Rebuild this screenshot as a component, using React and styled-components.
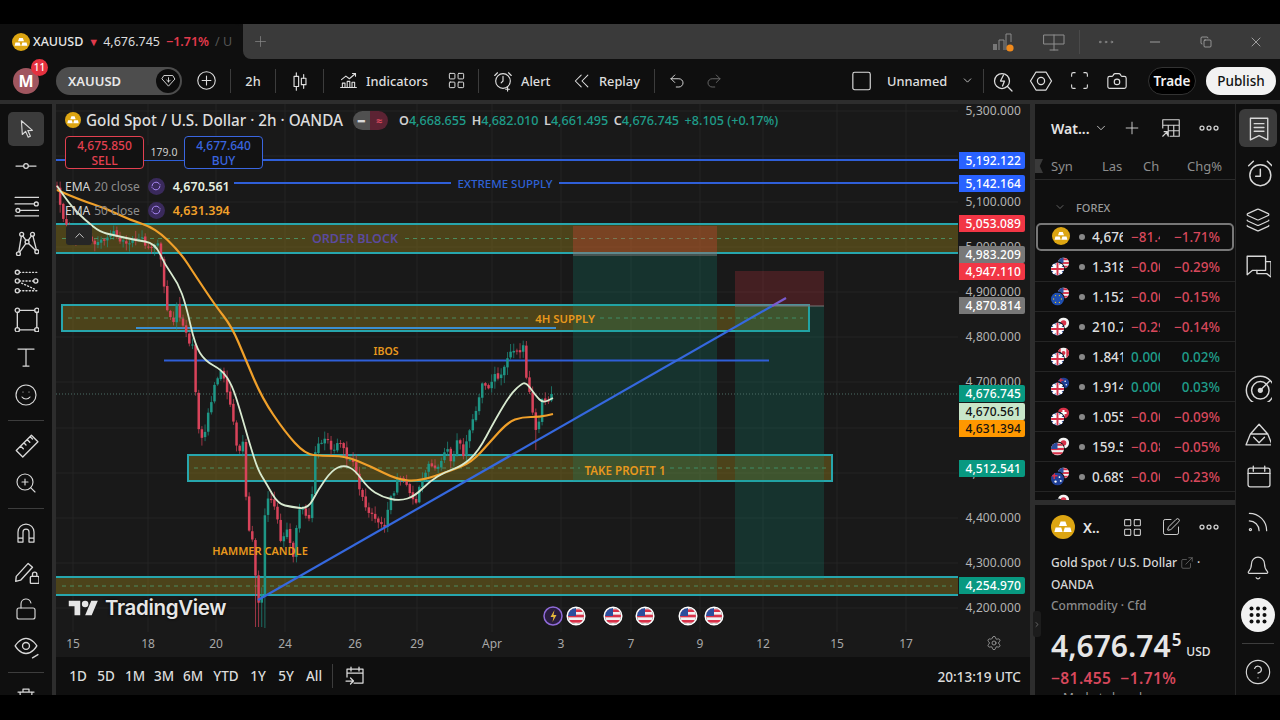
import React, { useId } from 'react';
import styled, { createGlobalStyle } from 'styled-components';
import { Rss, Bell, CircleHelp, Undo2, Redo2, Camera, Scan, SquarePen, LayoutGrid, ExternalLink, ChevronDown, ChevronRight, ChevronUp, Smile, ZoomIn, Plus, Minus, X, Copy, Layers, LockOpen, Ellipsis, Settings } from 'lucide-react';

const FONT = `"Noto Sans", "Open Sans", sans-serif`;

const GlobalStyle = createGlobalStyle`
  html, body { margin: 0; padding: 0; background: #000; }
  * { box-sizing: border-box; }
`;

const Page = styled.div`
  width: 1280px; height: 720px; background: #000; padding-top: 24px; overflow: hidden;
  font-family: ${FONT}; color: #dcdcdc;
`;
const Frame = styled.div`
  height: 671px; display: flex; flex-direction: column; background: #2d2d2d; overflow: hidden;
`;

/* ---- title bar ---- */
const TitleBar = styled.div`
  height: 35px; flex: none; display: flex; background: #0f0f0f;
`;
const Tab = styled.div`
  width: 243px; flex: none; display: flex; align-items: center; gap: 3px; padding-left: 12px;
  font-size: 12.5px; white-space: nowrap; overflow: hidden; background: #0f0f0f; border-radius: 0 8px 0 0;
`;
const TabName = styled.span` font-weight: 500; color: #e8e8e8; margin-right: 2px; `;
const TabDown = styled.span` color: #e23a4c; font-size: 11px; margin-right: 1px; `;
const TabPct = styled.span` color: #e23a4c; font-weight: 600; margin-left: 3px; `;
const TabDim = styled.span` color: #555; margin-left: 3px; `;
const WindowArea = styled.div`
  flex: 1; display: flex; align-items: center; background: #3a3a3a; border-radius: 0 0 0 8px; color: #9a9a9a; padding-left: 9px;
`;
const Spring = styled.div` flex: 1; `;
const WinBtn = styled.div`
  width: ${p => p.$w}px; display: flex; justify-content: center; align-items: center; color: ${p => p.$c || '#d0d0d0'};
`;
const WinSep = styled.div` width: 1px; height: 24px; background: #4a4a4a; `;

/* ---- toolbar ---- */
const Toolbar = styled.div`
  height: 41px; flex: none; display: flex; align-items: center; background: #0f0f0f; padding: 2px 4px 0 13px; margin-bottom: 4px;
`;
const Avatar = styled.div`
  position: relative; width: 26px; height: 26px; border-radius: 50%; background: #a0565f; color: #fff; font-weight: 700; font-size: 16px;
  display: flex; align-items: center; justify-content: center; margin-right: 17px; flex: none;
`;
const Badge = styled.span`
  position: absolute; top: -9px; right: -9px; width: 17px; height: 17px; border-radius: 50%; background: #e5313f; color: #fff; font-size: 10px; font-weight: 500;
  display: flex; align-items: center; justify-content: center;
`;
const SearchPill = styled.div`
  width: 126px; height: 28px; border-radius: 14px; background: #4d4d4d; display: flex; align-items: center; justify-content: space-between; padding: 0 2px 0 12px;
  font-size: 13px; font-weight: 600; color: #e8e8e8; flex: none;
`;
const DiamondWrap = styled.div`
  width: 24px; height: 24px; border-radius: 50%; background: #0c0c0c; display: flex; align-items: center; justify-content: center;
`;
const Tool = styled.div`
  width: ${p => p.$w}px; flex: none; display: flex; align-items: center; justify-content: ${p => p.$pl ? 'flex-start' : 'center'};
  padding-left: ${p => p.$pl || 0}px; gap: ${p => p.$gap || 0}px; font-size: 12.8px; color: ${p => p.$c || '#dedede'}; white-space: nowrap; font-weight: 500;
`;
const ToolSep = styled.div` width: 1px; height: 24px; background: #3c3c3c; flex: none; `;
const TradePill = styled.div`
  width: 48px; height: 28px; margin-left: 12px; border-radius: 14px; border: 1px solid #333; background: #000; color: #f2f2f2; font-size: 13.5px; font-weight: 600;
  display: flex; align-items: center; justify-content: center; flex: none;
`;
const PublishPill = styled.div`
  width: 70px; height: 28px; margin-left: 10px; border-radius: 14px; background: #f2f2f2; color: #111; font-size: 13.5px; font-weight: 500;
  display: flex; align-items: center; justify-content: center; flex: none;
`;

/* ---- body ---- */
const Body = styled.div` flex: 1; min-height: 0; display: flex; `;
const ToolColumn = styled.div`
  width: 52px; flex: none; margin-right: 4px; background: #0f0f0f; display: flex; flex-direction: column; align-items: center; padding-top: 8px; overflow: hidden; color: #d8d8d8;
`;
const ToolCell = styled.div`
  width: 36px; height: ${p => p.$h || 38}px; flex: none; display: flex; align-items: center; justify-content: center; border-radius: 5px;
  background: ${p => p.$on ? '#3b3b3b' : 'transparent'};
`;
const ToolRule = styled.div`
  width: 36px; height: 1px; flex: none; background: #3d3d3d; margin: ${p => p.$m || '6px 0 5px'};
`;
const MainColumn = styled.div` width: 974px; flex: none; display: flex; flex-direction: column; `;
const ChartRow = styled.div` flex: 1; min-height: 0; display: flex; background: #191919; `;
const PlotColumn = styled.div` width: 902px; flex: none; display: flex; flex-direction: column; `;
const Plot = styled.div` position: relative; height: 528px; flex: none; overflow: hidden; `;
const PlotSvg = styled.svg` display: block; font-family: ${FONT}; `;
const TimeAxis = styled.div`
  position: relative; height: 25px; flex: none; font-size: 12px; color: #a8a8a8;
`;
const TimeTick = styled.span`
  position: absolute; top: 3px; left: ${p => p.$x - 56}px; transform: translateX(-50%); line-height: 18px;
`;
const PriceAxis = styled.div`
  position: relative; width: 72px; flex: none; font-size: 12px; color: #b4b4b4;
`;
const AxisLabel = styled.span`
  position: absolute; right: 9px; top: ${p => p.$y - 104 - 9}px; line-height: 18px; letter-spacing: .1px;
`;
const PriceTag = styled.span`
  position: absolute; left: 1px; width: 66px; height: ${p => p.$h || 17}px; top: ${p => p.$y - 104}px; background: ${p => p.$bg}; color: ${p => p.$fg || '#fff'};
  font-size: 12px; font-weight: 500; line-height: ${p => p.$h || 17}px; text-align: right; padding-right: 4px; border-radius: 0 2px 2px 0; letter-spacing: .1px;
`;
const GearSlot = styled.div` position: absolute; right: 28px; top: 531px; color: #a8a8a8; `;

/* legend over the chart */
const Legend = styled.div`
  position: absolute; left: 9px; top: 4px; display: flex; flex-direction: column; align-items: flex-start;
`;
const SymbolRow = styled.div` display: flex; align-items: center; height: 24px; font-size: 15.25px; color: #dedede; white-space: nowrap; font-weight: 500; `;
const SymbolName = styled.span` margin-left: 5px; `;
const StatusPill = styled.div`
  display: flex; width: 35px; height: 19px; border-radius: 10px; overflow: hidden; margin-left: 10px; margin-right: 11px;
`;
const StatusHalf = styled.span`
  flex: 1; display: flex; align-items: center; justify-content: center; background: ${p => p.$bg}; color: ${p => p.$c}; font-size: 11px; font-weight: 700;
`;
const Ohlc = styled.span` font-size: 12.6px; color: #1f9d8a; display: flex; gap: 5.5px; font-weight: 500; `;
const OhlcKey = styled.b` color: #d0d0d0; font-weight: 600; `;
const TradeRow = styled.div` display: flex; align-items: center; margin-top: 4px; height: 33px; `;
const TradeBox = styled.div`
  width: 79px; height: 33px; border-radius: 4px; border: 1px solid ${p => p.$c}; background: #121212; color: ${p => p.$c}; display: flex; flex-direction: column; align-items: center; justify-content: center;
  font-size: 12px; line-height: 15px; font-weight: 500;
`;
const Spread = styled.span` width: 40px; text-align: center; font-size: 10.5px; color: #cfcfcf; background: #191919; line-height: 15px; `;
const EmaRow = styled.div`
  display: flex; align-items: center; height: 24px; font-size: 12px; color: #8d8d8d; margin-top: ${p => p.$mt || 0}px; white-space: nowrap;
`;
const EmaKey = styled.span` color: #d6d6d6; margin-right: 4px; `;
const EmaCircle = styled.span`
  width: 17px; height: 17px; margin: 0 8px; border-radius: 50%; background: #3a2a5c; color: #a483ee; display: flex; align-items: center; justify-content: center;
`;
const EmaVal = styled.span` color: ${p => p.$c}; font-weight: 600; font-size: 12.5px; `;
const CollapseBtn = styled.div`
  position: absolute; left: 10px; top: 121px; width: 26px; height: 20px; border-radius: 3px; background: #262626; color: #d0d0d0; display: flex; align-items: center; justify-content: center;
`;
const Brand = styled.div`
  position: absolute; left: 12px; top: 491px; display: flex; align-items: center; gap: 6px; color: #e6e6e6; font-family: Inter, ${FONT}; font-weight: 600; font-size: 20.5px; letter-spacing: -.35px; text-shadow: 0 0 3px #000;
`;

/* bottom range bar */
const RangeBar = styled.div`
  height: 38px; flex: none; background: #0f0f0f; display: flex; align-items: center; padding-left: 8px; font-size: 13.5px; color: #dcdcdc; font-weight: 500;
`;
const RangeBtn = styled.div` width: ${p => p.$w}px; flex: none; text-align: center; `;
const RangeSep = styled.div` width: 1px; height: 24px; background: #3c3c3c; margin: 0 10px 0 4px; `;
const Clock = styled.div` margin-left: auto; padding-right: 9px; font-size: 13.6px; `;

/* right panel */
const SideColumn = styled.div` width: 200px; margin-left: 5px; flex: none; display: flex; flex-direction: column; gap: 5px; position: relative; `;
const WatchPanel = styled.div` height: 396px; flex: none; background: #0f0f0f; overflow: hidden; display: flex; flex-direction: column; `;
const WatchHead = styled.div` height: 48px; flex: none; display: flex; align-items: center; padding-left: 16px; font-size: 14px; font-weight: 600; color: #e4e4e4; `;
const HeadBtn = styled.div` width: ${p => p.$w}px; margin-left: ${p => p.$ml || 0}px; flex: none; display: flex; align-items: center; justify-content: center; color: #d4d4d4; `;
const ColHead = styled.div`
  height: 28px; flex: none; display: flex; align-items: center; font-size: 13px; color: #8d8d8d; border-bottom: 1px solid #2a2a2a; padding-left: 16px; position: relative;
`;
const ColName = styled.span` width: ${p => p.$w}px; flex: none; `;
const SortFlag = styled.span` position: absolute; left: 0; top: 7px; width: 8px; height: 14px; background: #3a3a3a; clip-path: polygon(0 0, 100% 0, 60% 50%, 100% 100%, 0 100%); `;
const SectionHead = styled.div`
  height: 30px; margin-top: 12px; flex: none; display: flex; align-items: center; padding-left: 19px; gap: 10px; font-size: 11px; color: #9a9a9a; font-weight: 500;
`;
const Row = styled.div`
  height: 30px; flex: none; display: flex; align-items: center; padding-left: 16px; font-size: 13.5px; font-weight: 500; position: relative;
  border-bottom: 1px solid #252525;
  ${p => p.$sel && `
    border: 2px solid #777; border-radius: 5px; margin: 1px; height: 28px; padding-left: 13px; padding-right: 13px;
  `}
`;
const RowIcon = styled.div` width: 24px; height: 24px; flex: none; margin-right: 4px; `;
const GoldSlot = styled(RowIcon)` padding: 2px 0 0 1px; `;
const Dot = styled.span` width: 6px; height: 6px; border-radius: 50%; background: #888; flex: none; margin-right: 7px; `;
const CellClip = styled.span`
  width: ${p => p.$w}px; flex: none; overflow: hidden; white-space: nowrap; color: ${p => p.$c}; margin-right: ${p => p.$mr || 0}px;
`;
const RowPct = styled.span` width: 60px; flex: none; text-align: right; color: ${p => p.$c}; `;
const PartialRow = styled.div` height: 8px; padding-left: 16px; flex: none; `;

const DetailPanel = styled.div` flex: 1; min-height: 0; overflow: hidden; background: #0f0f0f; padding-left: 16px; `;
const DetailHead = styled.div` height: 44px; display: flex; align-items: center; font-size: 14px; font-weight: 600; color: #e4e4e4; `;
const HeadName = styled.span` margin-left: 8px; `;
const DetailLine = styled.div`
  display: flex; align-items: center; gap: 3px; height: 21.5px; font-size: 12px; font-weight: 500; color: ${p => p.$c || '#d8d8d8'}; white-space: nowrap;
`;
const FirstLine = styled(DetailLine)` margin-top: 3px; `;
const BigPrice = styled.div`
  display: flex; align-items: flex-start; height: 36px; margin-top: 11px; font-size: 30px; line-height: 36px; font-weight: 600; color: #e6e6e6; white-space: nowrap;
`;
const Frac = styled.sup` font-size: 17px; line-height: 24px; margin: 0 0 0 1px; vertical-align: top; `;
const Unit = styled.span` font-size: 12px; font-weight: 500; margin-left: 5px; line-height: 18px; margin-top: 15px; `;
const DayChange = styled.div` font-size: 15.5px; font-weight: 600; line-height: 22px; margin-top: 3px; color: #d8485c; letter-spacing: .4px; display: flex; gap: 9px; `;
const MarketNote = styled.div` font-size: 12px; color: #999; line-height: 16px; padding-left: 12px; margin-top: 1px; white-space: nowrap; `;
const SideTab = styled.div`
  position: absolute; left: -2px; top: 507px; width: 8px; height: 26px; border-radius: 3px; background: #1c1c1c; color: #aaa; display: flex; align-items: center; justify-content: center;
`;

/* rail */
const Rail = styled.div`
  flex: 1; background: #0f0f0f; border-left: 1px solid #262626; display: flex; flex-direction: column; align-items: center; padding-top: 1px; color: #d8d8d8; overflow: hidden;
`;
const RailCell = styled.div`
  height: ${p => p.$h}px; margin-top: ${p => p.$mt || 0}px; flex: none; display: flex; align-items: center; justify-content: center; width: 38px;
`;
const RailOn = styled.div`
  width: 38px; height: 38px; border-radius: 6px; background: #3b3b3b; display: flex; align-items: center; justify-content: center;
`;
const AppsDot = styled.div`
  width: 34px; height: 34px; border-radius: 50%; background: #f2f2f2; color: #0f0f0f; display: flex; align-items: center; justify-content: center;
`;
const RailRule = styled.div` width: 32px; height: 1px; background: #3d3d3d; flex: none; `;

const Ico = styled.svg`
  display: block; flex: none; fill: none; stroke: currentColor; stroke-width: ${p => p.$sw || 1.25}; stroke-linecap: round; stroke-linejoin: round;
`;
const GoldSvg = styled.svg` flex: none; display: block; `;

const I = ({ s = 24, sw, children, vb = '0 0 24 24' }) => <Ico width={s} height={s} viewBox={vb} $sw={sw}>{children}</Ico>;

const Gold = ({ s = 16 }) => (
  <GoldSvg width={s} height={s} viewBox="0 0 24 24">
    <circle cx="12" cy="12" r="12" fill="#dca512" />
    <path d="M9.6 6.5h4.8l1.6 4.5H8z M4.6 12.5h5.6l1.4 4.5H3.4z M13.8 12.5h5.6l1.2 4.5h-8.2z" fill="#fff" />
  </GoldSvg>
);

function FlagFill({ kind, cx, cy, r }) {
  const x = cx - r, y = cy - r, d = r * 2;
  switch (kind) {
    case 'uk': return <g>
      <rect x={x} y={y} width={d} height={d} fill="#2c4d9c" />
      <path d={`M${x} ${y}L${x + d} ${y + d}M${x + d} ${y}L${x} ${y + d}`} stroke="#fff" strokeWidth={r * .45} />
      <path d={`M${x} ${cy}H${x + d}M${cx} ${y}V${y + d}`} stroke="#fff" strokeWidth={r * .6} />
      <path d={`M${x} ${cy}H${x + d}M${cx} ${y}V${y + d}`} stroke="#d8324a" strokeWidth={r * .3} />
    </g>;
    case 'us': return <g>
      <rect x={x} y={y} width={d} height={d} fill="#f2f2f2" />
      {[0, 2, 4].map(i => <rect key={i} x={x} y={y + i * d / 6 + d / 12} width={d} height={d / 6} fill="#d8324a" />)}
      <rect x={x} y={y} width={r} height={r} fill="#2c4d9c" />
    </g>;
    case 'eu': return <g>
      <rect x={x} y={y} width={d} height={d} fill="#1f4fb0" />
      {[0, 60, 120, 180, 240, 300].map(a => <circle key={a} cx={cx + Math.cos(a * .01745) * r * .6} cy={cy + Math.sin(a * .01745) * r * .6} r={r * .1} fill="#e8c520" />)}
    </g>;
    case 'jp': return <g>
      <rect x={x} y={y} width={d} height={d} fill="#f4f4f4" />
      <circle cx={cx} cy={cy} r={r * .5} fill="#d8324a" />
    </g>;
    case 'ca': return <g>
      <rect x={x} y={y} width={d} height={d} fill="#f4f4f4" />
      <rect x={x} y={y} width={r * .5} height={d} fill="#d8324a" />
      <rect x={x + d - r * .5} y={y} width={r * .5} height={d} fill="#d8324a" />
      <circle cx={cx} cy={cy} r={r * .35} fill="#d8324a" />
    </g>;
    case 'au': return <g>
      <rect x={x} y={y} width={d} height={d} fill="#1f3f96" />
      <circle cx={cx + r * .3} cy={cy - r * .3} r={r * .14} fill="#fff" />
      <circle cx={cx + r * .5} cy={cy + r * .3} r={r * .14} fill="#fff" />
      <circle cx={cx - r * .3} cy={cy + r * .4} r={r * .18} fill="#fff" />
      <path d={`M${x} ${y + r * .5}H${cx}M${x + r * .5} ${y}V${cy}`} stroke="#d8324a" strokeWidth={r * .22} />
    </g>;
    case 'ch': return <g>
      <rect x={x} y={y} width={d} height={d} fill="#d8324a" />
      <path d={`M${cx - r * .55} ${cy}H${cx + r * .55}M${cx} ${cy - r * .55}V${cy + r * .55}`} stroke="#fff" strokeWidth={r * .38} />
    </g>;
    default: return null;
  }
}
function Flag({ kind, cx, cy, r, ring }) {
  const id = useId();
  return (
    <g>
      <clipPath id={id}><circle cx={cx} cy={cy} r={r} /></clipPath>
      <g clipPath={`url(#${id})`}><FlagFill kind={kind} cx={cx} cy={cy} r={r} /></g>
      {ring && <circle cx={cx} cy={cy} r={r + .8} fill="none" stroke="#fff" strokeWidth="1.5" />}
    </g>
  );
}
const PairSvg = styled.svg` display: block; `;
const PairIcon = ({ front, back }) => (
  <PairSvg width="24" height="24" viewBox="0 0 24 24">
    <Flag kind={back} cx={12.5} cy={8} r={5.6} />
    <circle cx={6.5} cy={14} r={7.4} fill="#0f0f0f" />
    <Flag kind={front} cx={6.5} cy={14} r={6.5} />
  </PairSvg>
);

/* ---- chart data ---- */
const CLOSES = [[57, 186], [62, 212], [68, 230], [76, 238], [84, 235], [92, 243], [100, 242], [108, 235], [116, 234], [124, 243], [132, 240], [140, 238], [150, 247], [157, 243], [162, 262], [166, 305], [172, 326], [177, 303], [181, 322], [187, 338], [193, 345], [197, 420], [203, 440], [208, 415], [213, 392], [220, 372], [226, 385], [232, 410], [238, 455], [243, 440], [248, 530], [253, 545], [258, 602], [262, 590], [266, 490], [270, 500], [276, 505], [281, 545], [287, 530], [293, 560], [298, 510], [304, 507], [310, 525], [315, 450], [320, 440], [326, 438], [332, 452], [340, 440], [348, 462], [354, 458], [360, 490], [368, 512], [376, 520], [384, 530], [390, 500], [398, 480], [406, 484], [415, 505], [422, 478], [430, 462], [438, 470], [446, 445], [452, 462], [458, 440], [464, 455], [470, 430], [476, 410], [482, 385], [488, 390], [494, 372], [500, 378], [506, 362], [512, 345], [518, 355], [524, 345], [527, 385], [531, 400], [535, 430], [539, 425], [543, 395], [547, 405], [553, 394]];
const E20 = [[57, 186], [70, 205], [85, 220], [100, 232], [113, 235], [135, 240], [155, 243], [165, 265], [178, 283], [186, 305], [195, 345], [205, 361], [222, 370], [232, 385], [240, 410], [250, 445], [258, 470], [266, 483], [278, 504], [292, 507], [308, 509], [318, 490], [332, 470], [344, 465], [355, 470], [368, 488], [382, 497], [400, 501], [415, 496], [430, 481], [445, 472], [462, 466], [478, 452], [495, 420], [510, 395], [520, 385], [526, 382], [536, 396], [543, 403], [553, 398]];
const E50 = [[57, 190], [80, 200], [105, 208], [130, 220], [155, 228], [180, 252], [195, 275], [215, 305], [232, 327], [245, 358], [262, 398], [285, 432], [305, 454], [322, 456], [345, 456], [370, 466], [398, 480], [420, 481], [450, 471], [472, 462], [490, 442], [508, 422], [522, 417], [540, 417], [553, 414]];

function interp(pts, x) {
  for (let i = 1; i < pts.length; i++) {
    if (x <= pts[i][0]) {
      const [a, b] = pts[i - 1], [c, d] = pts[i];
      return b + (d - b) * (x - a) / (c - a);
    }
  }
  return pts[pts.length - 1][1];
}
function makeCandles() {
  let s = 1234567;
  const r = () => { s = (s * 16807) % 2147483647; return s / 2147483647; };
  const list = [];
  let prev = CLOSES[0][1];
  for (let x = 57; x <= 553; x += 3.15) {
    const c = interp(CLOSES, x) + (r() - .5) * 7;
    const o = prev + (r() - .5) * 2;
    const top = Math.min(o, c), bot = Math.max(o, c);
    let hi = top - r() * 7 - 1, lo = bot + r() * 7 + 1;
    if (x > 255 && x < 262) lo = 627;
    if (x > 262 && x < 265) lo = 628;
    if (x > 524 && x < 528) hi = 341;
    if (x > 533 && x < 537) lo = 450;
    list.push({ x, o, c, hi, lo, up: c < o });
    prev = c;
  }
  return list;
}
const CANDLES = makeCandles();
const smooth = pts => {
  let d = `M${pts[0][0]} ${pts[0][1]}`;
  for (let i = 1; i < pts.length - 1; i++) {
    const mx = (pts[i][0] + pts[i + 1][0]) / 2, my = (pts[i][1] + pts[i + 1][1]) / 2;
    d += `Q${pts[i][0]} ${pts[i][1]} ${mx} ${my}`;
  }
  const l = pts[pts.length - 1];
  return d + `L${l[0]} ${l[1]}`;
};

const VTICKS = [73, 148, 216, 285, 355, 417, 492, 561, 631, 700, 763, 837, 906];
const HTICKS = [111, 156, 202, 247, 292, 337, 382, 428, 473, 518, 563, 608];
const TIME_LABELS = [[73, '15'], [148, '18'], [216, '20'], [285, '24'], [355, '26'], [417, '29'], [492, 'Apr'], [561, '3'], [631, '7'], [700, '9'], [763, '12'], [837, '15'], [906, '17']];
const AXIS_LABELS = [[111, '5,300.000'], [202, '5,100.000'], [247, '5,000.000'], [292, '4,900.000'], [337, '4,800.000'], [382, '4,700.000'], [473, '4,500.000'], [518, '4,400.000'], [563, '4,300.000'], [608, '4,200.000']];
const TAGS = [
  [152, '5,192.122', '#2962ff'], [175, '5,142.164', '#2962ff'], [215, '5,053.089', '#f23645'],
  [246, '4,983.209', '#787878'], [263, '4,947.110', '#f23645'], [297, '4,870.814', '#787878'],
  [385, '4,676.745', '#089981'], [403, '4,670.561', '#c8e6c9', '#111'], [420, '4,631.394', '#ff9800', '#111'],
  [460, '4,512.541', '#089981'], [577, '4,254.970', '#089981']
];
const ZONE = '#27a6ad', ZONEFILL = 'rgba(128,110,28,.5)', BLUE = '#2f5fd8', ORANGE = '#e8981d';

const Zone = ({ x, y, w, h, sides, gap }) => {
  const my = y + h / 2;
  const segs = gap ? [[x + 6, gap[0]], [gap[1], x + w - 6]] : [[x + 6, x + w - 6]];
  return (
    <g>
      <rect x={x} y={y} width={w} height={h} fill={ZONEFILL} />
      {segs.map(([a, b]) => <line key={a} x1={a} x2={b} y1={my} y2={my} stroke="#4c9d70" strokeWidth="1" strokeDasharray="4 4" opacity=".8" />)}
      {sides
        ? <rect x={x} y={y} width={w} height={h} fill="none" stroke={ZONE} strokeWidth="2" />
        : <g stroke={ZONE} strokeWidth="2"><line x1={x} x2={x + w} y1={y} y2={y} /><line x1={x} x2={x + w} y1={y + h} y2={y + h} /></g>}
    </g>
  );
};

const Label = ({ x, y, c = ORANGE, s = 11, w = 600, children }) => (
  <text x={x} y={y} fill={c} fontSize={s} fontWeight={w} textAnchor="middle" dominantBaseline="central">{children}</text>
);

const ChartDrawing = () => (
  <PlotSvg width="902" height="528" viewBox="56 104 902 528">
    <g stroke="#252525" strokeWidth="1">
      {VTICKS.map(x => <line key={x} x1={x} x2={x} y1="104" y2="632" />)}
      {HTICKS.map(y => <line key={y} x1="56" x2="958" y1={y} y2={y} />)}
    </g>
    <Zone x={56} y={224} w={902} h={29} gap={[305, 405]} />
    <Zone x={62} y={305} w={747} h={26} sides gap={[530, 600]} />
    <Zone x={188} y={455} w={644} h={26} sides gap={[580, 670]} />
    <Zone x={56} y={577} w={902} h={18} />

    <rect x="573" y="226" width="144" height="28" fill="rgba(242,70,60,.28)" />
    <rect x="573" y="254" width="144" height="227" fill="rgba(8,153,129,.2)" />
    <rect x="735" y="271" width="89" height="35" fill="rgba(242,54,69,.2)" />
    <rect x="735" y="306" width="89" height="274" fill="rgba(8,153,129,.2)" />
    <line x1="573" x2="717" y1="255" y2="255" stroke="#777" strokeWidth="1" />
    <line x1="735" x2="824" y1="306" y2="306" stroke="#777" strokeWidth="1" />

    <line x1="56" x2="958" y1="160" y2="160" stroke={BLUE} strokeWidth="2" />
    <line x1="234" x2="451" y1="183" y2="183" stroke={BLUE} strokeWidth="2" />
    <line x1="559" x2="958" y1="183" y2="183" stroke={BLUE} strokeWidth="2" />
    <line x1="164" x2="769" y1="360.5" y2="360.5" stroke={BLUE} strokeWidth="2" />
    <line x1="136" x2="556" y1="328" y2="328" stroke="#3b8fd0" strokeWidth="2" />
    <line x1="56" x2="958" y1="394" y2="394" stroke="#4c6f66" strokeWidth="1" strokeDasharray="1 2" />

    {CANDLES.map((k, i) => (
      <g key={i} fill={k.up ? '#1e9685' : '#d8435a'}>
        <rect x={k.x - .45} y={k.hi} width=".9" height={k.lo - k.hi} opacity=".75" />
        <rect x={k.x - 1.25} y={Math.min(k.o, k.c)} width="2.5" height={Math.max(1, Math.abs(k.c - k.o))} />
      </g>
    ))}

    <path d={smooth(E50)} fill="none" stroke="#f0a02a" strokeWidth="2.2" strokeLinejoin="round" />
    <path d={smooth(E20)} fill="none" stroke="#d8ead0" strokeWidth="1.8" strokeLinejoin="round" />

    <line x1="258" y1="600" x2="772" y2="306" stroke="#3568de" strokeWidth="2.2" />
    <line x1="772" y1="306" x2="786" y2="298" stroke="#7a5bd0" strokeWidth="2.2" />

    <Label x={505} y={183} c="#2f62d6" s={11.5} w={500}>EXTREME SUPPLY</Label>
    <Label x={355} y={238} c="#5b4a9e" s={12.5}>ORDER BLOCK</Label>
    <Label x={565} y={318} s={11.4}>4H SUPPLY</Label>
    <Label x={386} y={351} s={10.5}>IBOS</Label>
    <Label x={625} y={470} s={11.6}>TAKE PROFIT 1</Label>
    <Label x={260} y={550}>HAMMER CANDLE</Label>

    <circle cx="553" cy="616" r="9" fill="#2a1d3f" stroke="#8f6ad8" strokeWidth="1.5" />
    <path d="M554.5 610l-4 7h3l-1 5 4-7h-3z" fill="#e6b93a" />
    {[576, 613, 645, 688, 714].map(x => <Flag key={x} kind="us" cx={x} cy={616} r={8} ring />)}
  </PlotSvg>
);

const WATCH = [
  { back: 'us', front: 'uk', last: '1.31872', ch: '−0.00381', pct: '−0.29%', dn: true },
  { back: 'us', front: 'eu', last: '1.15234', ch: '−0.00172', pct: '−0.15%', dn: true },
  { back: 'jp', front: 'uk', last: '210.752', ch: '−0.295', pct: '−0.14%', dn: true },
  { back: 'ca', front: 'uk', last: '1.84172', ch: '0.00041', pct: '0.02%' },
  { back: 'au', front: 'uk', last: '1.91445', ch: '0.00052', pct: '0.03%' },
  { back: 'ch', front: 'uk', last: '1.05512', ch: '−0.00098', pct: '−0.09%', dn: true },
  { back: 'jp', front: 'us', last: '159.521', ch: '−0.080', pct: '−0.05%', dn: true },
  { back: 'us', front: 'au', last: '0.68912', ch: '−0.00160', pct: '−0.23%', dn: true },
];
const RED = '#d8485c', GREEN = '#1f9d8a';

const DotsIcon = () => (
  <I s={24}><circle cx="5" cy="12" r="2" /><circle cx="12" cy="12" r="2" /><circle cx="19" cy="12" r="2" /></I>
);
const SyncIcon = () => (
  <I s={12} sw={2}><path d="M4 12a8 8 0 0 1 14-5l2 2M20 12a8 8 0 0 1-14 5l-2-2" /></I>
);

export default function App() {
  return (
    <Page>
      <GlobalStyle />
      <Frame>
        <TitleBar>
          <Tab>
            <Gold s={18} />
            <TabName>XAUUSD</TabName>
            <TabDown>▼</TabDown>
            <span>4,676.745</span>
            <TabPct>−1.71%</TabPct>
            <TabDim>/ U</TabDim>
          </Tab>
          <WindowArea>
            <Plus size={17} strokeWidth={1} color="#8a8a8a" />
            <Spring />
            <WinBtn $w={52} $c="#8a8a8a">
              <svg width="24" height="22" viewBox="0 0 24 22">
                <rect x="2" y="13" width="4" height="6" fill="#777" /><path d="M8 19V9h5v10M15 19V3h5v8" fill="none" stroke="#8a8a8a" />
                <circle cx="19" cy="17" r="3.6" fill="#f08a1c" />
              </svg>
            </WinBtn>
            <WinBtn $w={50} $c="#8f8f8f">
              <I s={24} sw={1}><path d="M2 5h20v9H2zM12 5v15M8 20h8" /></I>
            </WinBtn>
            <WinSep />
            <WinBtn $w={52} $c="#8f8f8f"><Ellipsis size={20} strokeWidth={1} /></WinBtn>
            <WinBtn $w={46}><Minus size={16} strokeWidth={1} /></WinBtn>
            <WinBtn $w={56}><Copy size={12} strokeWidth={1.2} /></WinBtn>
            <WinBtn $w={44}><X size={16} strokeWidth={1} /></WinBtn>
            <WinBtn $w={2} />
          </WindowArea>
        </TitleBar>

        <Toolbar>
          <Avatar>M<Badge>11</Badge></Avatar>
          <SearchPill>
            XAUUSD
            <DiamondWrap>
              <I s={17}><path d="M6 5h12l3 5-9 10L3 10z" /><path d="M12 8v6M9.5 11.5L12 14l2.5-2.5" /></I>
            </DiamondWrap>
          </SearchPill>
          <Tool $w={48}>
            <I s={21}><circle cx="12" cy="12" r="10" /><path d="M12 7v10M7 12h10" /></I>
          </Tool>
          <ToolSep />
          <Tool $w={44}>2h</Tool>
          <ToolSep />
          <Tool $w={47}>
            <I s={22}><path d="M8 3v4M8 18v4M16 5v4M16 16v4" /><rect x="5.5" y="7" width="5" height="11" /><rect x="13.5" y="9" width="5" height="7" /></I>
          </Tool>
          <ToolSep />
          <Tool $w={110} $pl={14} $gap={7}>
            <I s={21}><path d="M3 20h18M5 20v-5h3v5M10.5 20v-7h3v7M16 20v-6h3v6" /><path d="M4 11l5-4 4 3 7-6" /><path d="M16.5 4H20v3" /></I>
            Indicators
          </Tool>
          <Tool $w={44}><LayoutGrid size={19} strokeWidth={1.25} /></Tool>
          <ToolSep />
          <Tool $w={76} $pl={13} $gap={7}>
            <I s={22}><circle cx="12" cy="12" r="8" /><path d="M12 7v5l-2 2M3 6l3-3M21 6l-3-3M17 19v4M15 21h4" /></I>
            Alert
          </Tool>
          <Tool $w={99} $pl={17} $gap={7}>
            <I s={20}><path d="M11 5l-7 7 7 7M19 5l-7 7 7 7" /></I>
            Replay
          </Tool>
          <ToolSep />
          <Tool $w={44}><Undo2 size={18} strokeWidth={1.25} /></Tool>
          <Tool $w={30} $c="#6a6a6a"><Redo2 size={18} strokeWidth={1.25} /></Tool>
          <Spring />
          <Tool $w={139} $pl={7} $gap={14}>
            <I s={22}><rect x="2" y="2.5" width="19" height="19" rx="2" /></I>
            <span>Unnamed</span>
            <ChevronDown size={13} strokeWidth={1.5} />
          </Tool>
          <ToolSep />
          <Tool $w={38}>
            <I s={24}><circle cx="11" cy="12" r="7.5" /><path d="M16.5 17.5L21 22M12.5 6l-3 6h4l-2 5" /></I>
          </Tool>
          <Tool $w={38}>
            <I s={24}><path d="M1.5 12L7 3h10l5.5 9L17 21H7z" /><circle cx="12" cy="12" r="3.6" /></I>
          </Tool>
          <Tool $w={38}><Scan size={21} strokeWidth={1.25} /></Tool>
          <Tool $w={38}><Camera size={22} strokeWidth={1.25} /></Tool>
          <TradePill>Trade</TradePill>
          <PublishPill>Publish</PublishPill>
        </Toolbar>

        <Body>
          <ToolColumn>
            <ToolCell $on $h={34}><I s={22}><path d="M7 3l1 15 3.6-3.4 2.8 6.4 2.4-1-2.8-6.3 5-.2z" /></I></ToolCell>
            <ToolCell $h={40}><I s={24}><path d="M2 12h7.5M14.5 12H22" /><circle cx="12" cy="12" r="2.3" /></I></ToolCell>
            <ToolCell><I s={26}><path d="M2 5h22M2 11h17M7 17h17M2 22h22" /><circle cx="21.5" cy="11" r="1.8" /><circle cx="4.5" cy="17" r="1.8" /></I></ToolCell>
            <ToolCell><I s={26}><path d="M8 4l5 7 5-7M5 22l3-18M5 22l8-11 9 9M18 4l4 16" /><circle cx="8" cy="4" r="1.8" fill="#0f0f0f" /><circle cx="18" cy="4" r="1.8" fill="#0f0f0f" /><circle cx="13" cy="11" r="1.8" fill="#0f0f0f" /><circle cx="5" cy="22" r="1.8" fill="#0f0f0f" /><circle cx="22" cy="20" r="1.8" fill="#0f0f0f" /></I></ToolCell>
            <ToolCell><I s={26}><path d="M6 4h18M6 12h13M6 21h18M8 14l13 6" strokeDasharray="1 2" /><circle cx="4" cy="4" r="1.9" /><circle cx="21" cy="12" r="1.9" /><circle cx="4" cy="12" r="1.9" /><circle cx="4" cy="21" r="1.9" /></I></ToolCell>
            <ToolCell><I s={26}><path d="M6 4h14M6 22h14M4 6v14M22 6v14" /><circle cx="4" cy="4" r="2" /><circle cx="22" cy="4" r="2" /><circle cx="4" cy="22" r="2" /><circle cx="22" cy="22" r="2" /></I></ToolCell>
            <ToolCell><I s={24}><path d="M4 4h16M12 4v17M9 21h6" /></I></ToolCell>
            <ToolCell><Smile size={24} strokeWidth={1.15} /></ToolCell>
            <ToolRule />
            <ToolCell><I s={26}><path d="M3 17L17 3l6 6L9 23z M7 13l2.5 2.5M10 10l2 2M13 7l2.5 2.5M16 4.5l2 2" /></I></ToolCell>
            <ToolCell><ZoomIn size={24} strokeWidth={1.15} /></ToolCell>
            <ToolRule />
            <ToolCell><I s={24}><path d="M4 21V11a8 8 0 0 1 16 0v10h-5V11a3 3 0 0 0-6 0v10zM4 17h5M15 17h5" /></I></ToolCell>
            <ToolCell><I s={26}><path d="M3 17L14 5l4 3.5-11 12-4.5 1z" /><rect x="16" y="17" width="8" height="6.5" rx="1" /><path d="M18 17v-2a2 2 0 0 1 4 0v2" /></I></ToolCell>
            <ToolCell><LockOpen size={24} strokeWidth={1.15} /></ToolCell>
            <ToolCell><I s={26}><path d="M2 11s4-7 10-7 10 7 10 7-4 7-10 7-10-7-10-7z" /><circle cx="12" cy="11" r="3.2" /><path d="M18 22l5-3" /></I></ToolCell>
            <ToolRule />
            <ToolCell><I s={24}><path d="M4 7h16M9 7V4h6v3M6 7l1 14h10l1-14" /></I></ToolCell>
          </ToolColumn>

          <MainColumn>
            <ChartRow>
              <PlotColumn>
                <Plot>
                  <ChartDrawing />
                  <Legend>
                    <SymbolRow>
                      <Gold s={16} />
                      <SymbolName>Gold Spot / U.S. Dollar · 2h · OANDA</SymbolName>
                      <StatusPill>
                        <StatusHalf $bg="#505050" $c="#d8d8d8">━</StatusHalf>
                        <StatusHalf $bg="#5c2333" $c="#d8485c">≈</StatusHalf>
                      </StatusPill>
                      <Ohlc>
                        <span><OhlcKey>O</OhlcKey>4,668.655</span>
                        <span><OhlcKey>H</OhlcKey>4,682.010</span>
                        <span><OhlcKey>L</OhlcKey>4,661.495</span>
                        <span><OhlcKey>C</OhlcKey>4,676.745</span>
                        <span>+8.105 (+0.17%)</span>
                      </Ohlc>
                    </SymbolRow>
                    <TradeRow>
                      <TradeBox $c="#e24050"><span>4,675.850</span><span>SELL</span></TradeBox>
                      <Spread>179.0</Spread>
                      <TradeBox $c="#3a66e0"><span>4,677.640</span><span>BUY</span></TradeBox>
                    </TradeRow>
                    <EmaRow $mt={5}>
                      <EmaKey>EMA</EmaKey>20 close
                      <EmaCircle><SyncIcon /></EmaCircle>
                      <EmaVal $c="#e6f0e0">4,670.561</EmaVal>
                    </EmaRow>
                    <EmaRow>
                      <EmaKey>EMA</EmaKey>50 close
                      <EmaCircle><SyncIcon /></EmaCircle>
                      <EmaVal $c="#f0a02a">4,631.394</EmaVal>
                    </EmaRow>
                  </Legend>
                  <CollapseBtn><ChevronUp size={15} strokeWidth={1.5} /></CollapseBtn>
                  <Brand>
                    <svg width="31" height="18" viewBox="0 0 36 22"><path d="M14 20H7V9H0V2h14zM28 20h-8l7.5-18h8z M16 6a4 4 0 1 0 8 0a4 4 0 1 0-8 0" fill="#e6e6e6" /></svg>
                    TradingView
                  </Brand>
                </Plot>
                <TimeAxis>
                  {TIME_LABELS.map(([x, t]) => <TimeTick key={x + t} $x={x}>{t}</TimeTick>)}
                </TimeAxis>
              </PlotColumn>
              <PriceAxis>
                {AXIS_LABELS.map(([y, t]) => <AxisLabel key={t} $y={y}>{t}</AxisLabel>)}
                {TAGS.map(([y, t, bg, fg]) => <PriceTag key={t} $y={y} $bg={bg} $fg={fg}>{t}</PriceTag>)}
                <GearSlot><Settings size={16} strokeWidth={1.2} /></GearSlot>
              </PriceAxis>
            </ChartRow>
            <RangeBar>
              {[['1D', 28], ['5D', 28], ['1M', 30], ['3M', 28], ['6M', 30], ['YTD', 36], ['1Y', 28], ['5Y', 28], ['All', 28]].map(([t, w]) => <RangeBtn key={t} $w={w}>{t}</RangeBtn>)}
              <RangeSep />
              <I s={24}><path d="M4 13V5h16v14h-9M4 9h16M8 3v4M16 3v4M3 17h7M7.5 14l3 3-3 3" /></I>
              <Clock>20:13:19 UTC</Clock>
            </RangeBar>
          </MainColumn>

          <SideColumn>
            <WatchPanel>
              <WatchHead>
                <span>Wat...</span>
                <HeadBtn $w={22}><ChevronDown size={14} strokeWidth={1.5} /></HeadBtn>
                <HeadBtn $w={40}><Plus size={20} strokeWidth={1.1} /></HeadBtn>
                <HeadBtn $w={38}><I s={22}><path d="M3 3h18v18H11M3 3v9M3 9h18M9 9v12M15 9v12M9 15h12M3 21l5-5M4.5 16H8v3.5" /></I></HeadBtn>
                <HeadBtn $w={38}><DotsIcon /></HeadBtn>
              </WatchHead>
              <ColHead>
                <SortFlag />
                <ColName $w={51}>Syn</ColName>
                <ColName $w={41}>Las</ColName>
                <ColName $w={44}>Ch</ColName>
                <ColName $w={34}>Chg%</ColName>
              </ColHead>
              <SectionHead>
                <ChevronDown size={12} strokeWidth={1.2} />
                FOREX
              </SectionHead>
              <Row $sel>
                <GoldSlot><Gold s={18} /></GoldSlot>
                <Dot />
                <CellClip $w={31} $c="#dedede" $mr={8}>4,676.745</CellClip>
                <CellClip $w={29} $c={RED}>−81.455</CellClip>
                <RowPct $c={RED}>−1.71%</RowPct>
              </Row>
              {WATCH.map(r => (
                <Row key={r.pct + r.last}>
                  <RowIcon><PairIcon front={r.front} back={r.back} /></RowIcon>
                  <Dot />
                  <CellClip $w={31} $c="#dedede" $mr={8}>{r.last}</CellClip>
                  <CellClip $w={29} $c={r.dn ? RED : GREEN}>{r.ch}</CellClip>
                  <RowPct $c={r.dn ? RED : GREEN}>{r.pct}</RowPct>
                </Row>
              ))}
              <PartialRow><RowIcon><PairIcon front="us" back="jp" /></RowIcon></PartialRow>
            </WatchPanel>
            <DetailPanel>
              <DetailHead>
                <Gold s={24} />
                <HeadName>X..</HeadName>
                <HeadBtn $w={38} $ml={14}><LayoutGrid size={21} strokeWidth={1.15} /></HeadBtn>
                <HeadBtn $w={38}><SquarePen size={20} strokeWidth={1.15} /></HeadBtn>
                <HeadBtn $w={38}><DotsIcon /></HeadBtn>
              </DetailHead>
              <FirstLine>Gold Spot / U.S. Dollar <ExternalLink size={14} strokeWidth={1} color="#8a8a8a" /> ·</FirstLine>
              <DetailLine>OANDA</DetailLine>
              <DetailLine $c="#8a8a8a">Commodity · Cfd</DetailLine>
              <BigPrice>4,676.74<Frac>5</Frac><Unit>USD</Unit></BigPrice>
              <DayChange><span>−81.455</span><span>−1.71%</span></DayChange>
              <MarketNote>Market closed</MarketNote>
            </DetailPanel>
            <SideTab><ChevronRight size={9} strokeWidth={1.5} /></SideTab>
          </SideColumn>

          <Rail>
            <RailCell $h={46}>
              <RailOn><I s={26}><path d="M5 3h16v20l-8-4-8 4z M8.5 8h9M8.5 11.5h9M8.5 15h9" /></I></RailOn>
            </RailCell>
            <RailCell $h={46}><I s={28}><circle cx="14" cy="13" r="9" /><path d="M14 8v6h-4M4 5l4-4M24 5l-4-4" /></I></RailCell>
            <RailCell $h={46}><Layers size={26} strokeWidth={1.1} /></RailCell>
            <RailCell $h={46}><I s={26}><path d="M2 3h17v13H7l-5 4z" /><path d="M19 8h5v14l-4-3h-9v-3" /></I></RailCell>
            <RailCell $h={46} $mt={76}><I s={28}><circle cx="14" cy="14" r="12" /><circle cx="14" cy="14" r="7.5" /><circle cx="14" cy="14" r="1.6" fill="currentColor" /><path d="M14 14l8-8" /></I></RailCell>
            <RailCell $h={46}><I s={26}><path d="M13 3l8 9H5zM5 12l-4 10h24l-4-10" /><path d="M8 15l5 5 5-5" /></I></RailCell>
            <RailCell $h={38}><I s={25}><rect x="2" y="4" width="21" height="18" rx="2" /><path d="M2 9h21M7 2v5M18 2v5" /></I></RailCell>
            <RailCell $h={54}><Rss size={26} strokeWidth={1.1} /></RailCell>
            <RailCell $h={38}><Bell size={26} strokeWidth={1.1} /></RailCell>
            <RailCell $h={56}>
              <AppsDot>
                <svg width="18" height="18" viewBox="0 0 18 18" fill="currentColor">
                  {[2.5, 9, 15.5].flatMap(y => [2.5, 9, 15.5].map(x => <circle key={`${x}-${y}`} cx={x} cy={y} r="2" />))}
                </svg>
              </AppsDot>
            </RailCell>
            <RailRule />
            <RailCell $h={56}><CircleHelp size={28} strokeWidth={1} /></RailCell>
          </Rail>
        </Body>
      </Frame>
    </Page>
  );
}
